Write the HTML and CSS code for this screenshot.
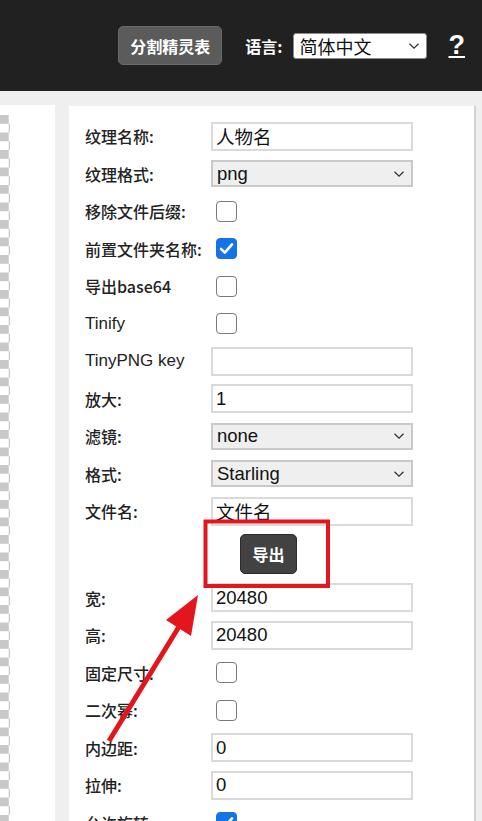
FILE: index.html
```html
<!DOCTYPE html>
<html lang="zh-CN">
<head>
<meta charset="utf-8">
<title>导出设置</title>
<link rel="stylesheet" href="styles.css">
</head>
<body>
<header class="topbar">
  <button class="split-btn">分割精灵表</button>
  <span class="lang-label">语言:</span>
  <div class="lang-select"><span>简体中文</span><svg class="chev" width="12" height="8" viewBox="0 0 12 8"><path d="M1.5 1.8 L6 6.2 L10.5 1.8" fill="none" stroke="#333" stroke-width="1.3"/></svg></div>
  <a class="help">?</a>
</header>
<main class="workspace">
  <section class="canvas-panel"><div class="checker"></div></section>
  <section class="settings">
    <div class="row"><span class="lbl">纹理名称:</span><div class="field">人物名</div></div>
    <div class="row"><span class="lbl">纹理格式:</span><div class="dropdown"><span>png</span><svg class="chev" width="12" height="8" viewBox="0 0 12 8"><path d="M1.5 1.8 L6 6.2 L10.5 1.8" fill="none" stroke="#333" stroke-width="1.3"/></svg></div></div>
    <div class="row"><span class="lbl">移除文件后缀:</span><span class="box"></span></div>
    <div class="row"><span class="lbl">前置文件夹名称:</span><span class="box checked"><svg width="21" height="21" viewBox="0 0 21 21"><path d="M5 10.8 L8.8 14.6 L16 6.4" fill="none" stroke="#fff" stroke-width="2.6" stroke-linecap="round" stroke-linejoin="round"/></svg></span></div>
    <div class="row"><span class="lbl">导出base64</span><span class="box"></span></div>
    <div class="row"><span class="lbl plain">Tinify</span><span class="box"></span></div>
    <div class="row"><span class="lbl plain">TinyPNG key</span><div class="field"></div></div>
    <div class="row"><span class="lbl">放大:</span><div class="field">1</div></div>
    <div class="row"><span class="lbl">滤镜:</span><div class="dropdown"><span>none</span><svg class="chev" width="12" height="8" viewBox="0 0 12 8"><path d="M1.5 1.8 L6 6.2 L10.5 1.8" fill="none" stroke="#333" stroke-width="1.3"/></svg></div></div>
    <div class="row"><span class="lbl">格式:</span><div class="dropdown"><span>Starling</span><svg class="chev" width="12" height="8" viewBox="0 0 12 8"><path d="M1.5 1.8 L6 6.2 L10.5 1.8" fill="none" stroke="#333" stroke-width="1.3"/></svg></div></div>
    <div class="row"><span class="lbl">文件名:</span><div class="field">文件名</div></div>
    <div class="btn-row"><button class="export-btn">导出</button></div>
    <div class="row"><span class="lbl">宽:</span><div class="field">20480</div></div>
    <div class="row"><span class="lbl">高:</span><div class="field">20480</div></div>
    <div class="row"><span class="lbl">固定尺寸:</span><span class="box"></span></div>
    <div class="row"><span class="lbl">二次幂:</span><span class="box"></span></div>
    <div class="row"><span class="lbl">内边距:</span><div class="field">0</div></div>
    <div class="row"><span class="lbl">拉伸:</span><div class="field">0</div></div>
    <div class="row"><span class="lbl">允许旋转:</span><span class="box checked"><svg width="21" height="21" viewBox="0 0 21 21"><path d="M5 10.8 L8.8 14.6 L16 6.4" fill="none" stroke="#fff" stroke-width="2.6" stroke-linecap="round" stroke-linejoin="round"/></svg></span></div>
  </section>
</main>
<svg class="annotation" width="482" height="821" viewBox="0 0 482 821">
  <rect x="205.5" y="521.5" width="122.5" height="64.5" fill="none" stroke="#e3161e" stroke-width="4"/>
  <line x1="109" y1="741" x2="180" y2="625" stroke="#e3161e" stroke-width="5"/>
  <polygon points="198,595 191,636 166,620" fill="#e3161e"/>
</svg>
</body>
</html>
```
FILE: styles.css
```css
* { box-sizing: border-box; }
html, body { margin: 0; padding: 0; }
body {
  width: 482px;
  height: 821px;
  overflow: hidden;
  background: #efefef;
  font-family: "Liberation Sans", "Noto Sans CJK SC", sans-serif;
  color: #222;
  position: relative;
}
.topbar {
  height: 91px;
  background: #212121;
  display: flex;
  align-items: center;
  justify-content: flex-end;
  padding-right: 17px;
}
.split-btn {
  height: 39px;
  width: 104px;
  background: #5b5b5b;
  border: 1px solid #6a6a6a;
  border-radius: 5px;
  color: #fff;
  font-family: "Noto Sans CJK SC", sans-serif;
  font-weight: 700;
  font-size: 16px;
  padding: 0;
  margin-right: 23px;
}
.lang-label {
  color: #fff;
  font-family: "Noto Sans CJK SC", sans-serif;
  font-weight: 700;
  font-size: 16px;
  margin-right: 10px;
}
.lang-select {
  width: 134px;
  height: 26px;
  background: #fff;
  border: 1px solid #8a8a8a;
  border-radius: 3px;
  display: flex;
  align-items: center;
  justify-content: space-between;
  padding: 0 6px 0 6px;
  font-family: "Noto Sans CJK SC", sans-serif;
  font-size: 18px;
  color: #111;
  margin-right: 22px;
}
.help {
  color: #fff;
  font-family: "Liberation Sans", sans-serif;
  font-weight: 700;
  font-size: 27px;
  text-decoration: underline;
  text-underline-offset: 2px;
  text-decoration-thickness: 2px;
}
.workspace {
  display: flex;
  gap: 14px;
  padding-top: 14px;
  height: 730px;
}
.canvas-panel {
  width: 55px;
  background: #fff;
  padding-top: 10px;
}
.checker {
  width: 10px;
  height: 100%;
  background: repeating-conic-gradient(#fff 0 25%, #c8c8c8 0 50%) 0 0 / 17.5px 17.5px;
}
.settings {
  width: 407px;
  margin-top: 1px;
  background: #fff;
  border-right: 2px solid #d2d2d2;
  padding: 11.25px 0 0 16px;
}
.row {
  height: 37.5px;
  display: grid;
  grid-template-columns: 126px 202px;
  align-items: center;
}
.lbl {
  font-family: "Noto Sans CJK SC", sans-serif;
  font-size: 16px;
  font-weight: 500;
  color: #222;
  white-space: nowrap;
}
.lbl.plain {
  font-family: "Liberation Sans", "Noto Sans CJK SC", sans-serif;
  font-weight: 400;
  font-size: 17px;
  color: #222;
}
.field {
  height: 29px;
  border: 2px solid #dadada;
  padding: 0 3px;
  font-family: "Liberation Sans", "Noto Sans CJK SC", sans-serif;
  font-size: 18.5px;
  color: #111;
  display: flex;
  align-items: center;
}
.dropdown {
  height: 27px;
  background: #efefef;
  border: 2px solid #c9c9c9;
  padding: 0 6px 0 4px;
  font-family: "Liberation Sans", sans-serif;
  font-size: 18.5px;
  color: #111;
  display: flex;
  align-items: center;
  justify-content: space-between;
}
.box {
  width: 21px;
  height: 21px;
  margin-left: 5px;
  border: 1.5px solid #7a7a7a;
  border-radius: 4px;
  background: #fff;
  display: block;
}
.box.checked {
  background: #1473e6;
  border-color: #1473e6;
}
.box.checked svg {
  display: block;
  margin: -1.5px;
}
.btn-row {
  height: 49px;
  display: flex;
  align-items: center;
  padding-left: 155px;
}
.export-btn {
  width: 57px;
  height: 40px;
  background: #424242;
  border: 1px solid #2b2b2b;
  border-radius: 5px;
  color: #fff;
  font-family: "Noto Sans CJK SC", sans-serif;
  font-weight: 700;
  font-size: 16px;
  padding: 0;
}
.annotation {
  position: absolute;
  left: 0;
  top: 0;
  pointer-events: none;
}
```
